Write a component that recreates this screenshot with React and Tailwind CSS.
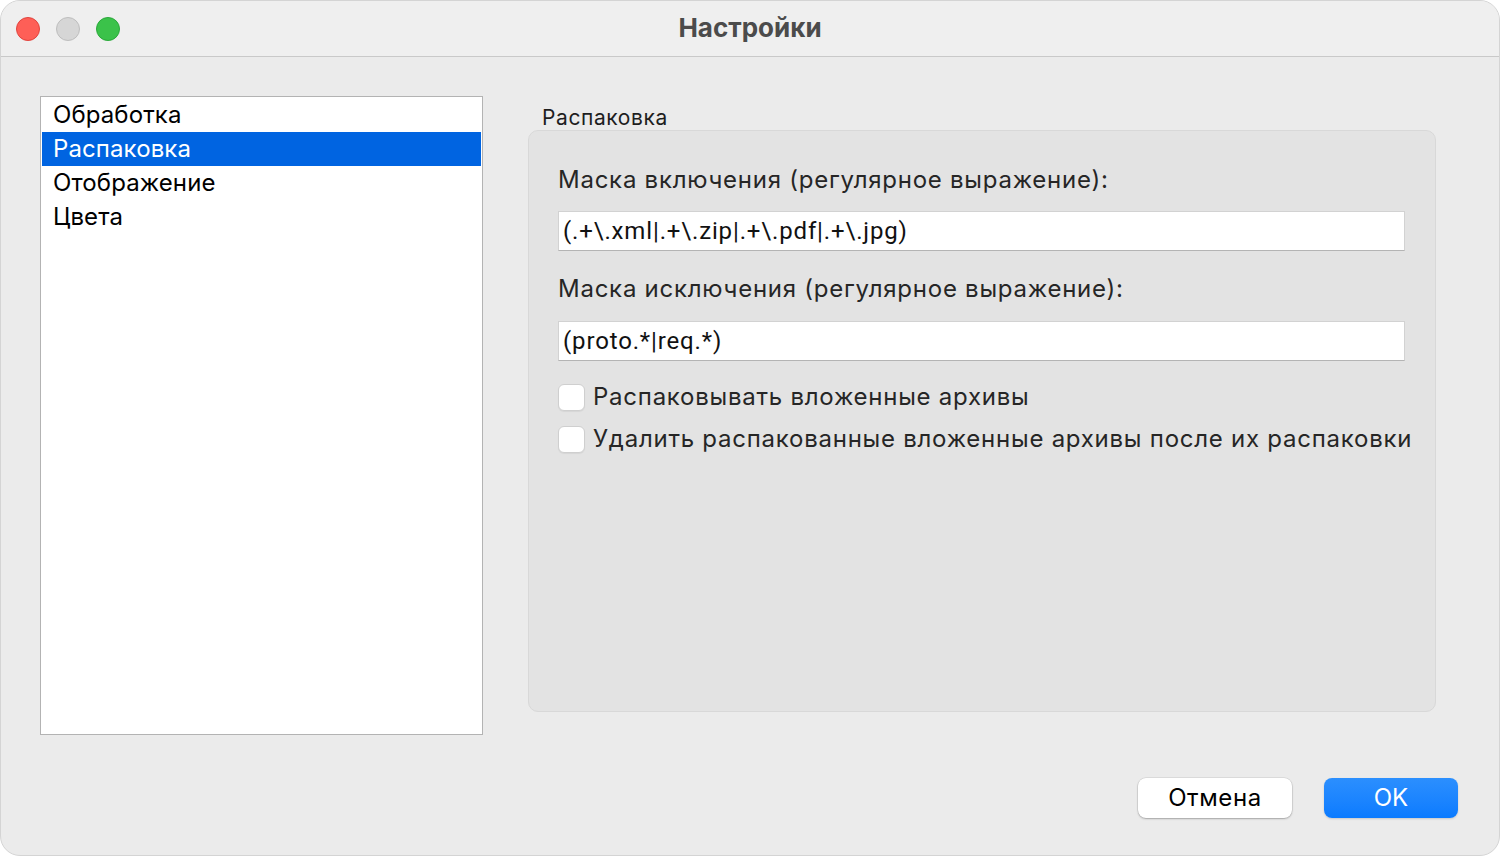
const FONT = "font-['Inter','Liberation_Sans',sans-serif]";

const SECTIONS = ["Обработка", "Распаковка", "Отображение", "Цвета"];

function TrafficLights() {
  return (
    <div className="flex items-center gap-4 pl-[15px]">
      <span className="h-6 w-6 rounded-full border border-[#e0443e] bg-[#fe5f57]" />
      <span className="h-6 w-6 rounded-full border border-[#bdbdbd] bg-[#d6d6d6]" />
      <span className="h-6 w-6 rounded-full border border-[#2aa83a] bg-[#3bc24a]" />
    </div>
  );
}

function TextField({ value }) {
  return (
    <div className="flex h-10 items-center border border-[#d2d2d2] border-b-[#b4b4b4] bg-white pl-1 font-['Roboto',sans-serif] text-[24px] tracking-[0.85px] text-[#111]">
      {value}
    </div>
  );
}

function Checkbox({ label }) {
  return (
    <label className="flex h-[34px] items-center gap-2">
      <span className="h-[27px] w-[27px] shrink-0 rounded-md border border-[#cfcfcf] bg-white shadow-[0_1px_1px_rgba(0,0,0,0.06)]" />
      <span className="text-[24px] tracking-[0.75px] text-[#262626]">{label}</span>
    </label>
  );
}

export default function App() {
  return (
    <div className={`h-[856px] w-[1500px] bg-white ${FONT}`}>
      <div className="flex h-full flex-col overflow-hidden rounded-[20px] border border-[#d4d4d4] bg-[#ebebeb]">
        <div className="relative flex h-[56px] shrink-0 items-center border-b border-[#c9c9c9] bg-[#efefef]">
          <TrafficLights />
          <div className="absolute inset-x-0 top-0 flex h-full items-center justify-center pb-[2px] text-[26px] font-bold text-[#4b4b4b]">
            Настройки
          </div>
        </div>

        <div className="flex flex-1 flex-col pl-[39px] pr-[41px] pt-[39px]">
          <div className="flex gap-[45px]">
            <div className="h-[639px] w-[443px] shrink-0 border border-[#b3b3b3] bg-white p-px">
              {SECTIONS.map((s, i) => (
                <div
                  key={s}
                  className={
                    i === 1
                      ? "flex h-[34px] items-center bg-[#0064e1] pl-[11px] text-[24px] tracking-[0.1px] text-white"
                      : "flex h-[34px] items-center pl-[11px] text-[24px] tracking-[0.1px] text-black"
                  }
                >
                  {s}
                </div>
              ))}
            </div>

            <div className="flex w-[908px] flex-col">
              <div className="h-[34px] pl-[14px] pt-[8px] text-[21px] leading-[28px] tracking-[0.6px] text-[#1e1e1e]">Распаковка</div>
              <div className="h-[582px] rounded-[10px] border border-[#d8d8d8] bg-[#e3e3e3] pl-[29px] pr-[30px] pt-[32px]">
                <div className="text-[24px] leading-[34px] tracking-[0.75px] text-[#262626]">Маска включения (регулярное выражение):</div>
                <div className="mt-[14px]">
                  <TextField value="(.+\.xml|.+\.zip|.+\.pdf|.+\.jpg)" />
                </div>
                <div className="mt-[21px] text-[24px] leading-[34px] tracking-[0.75px] text-[#262626]">Маска исключения (регулярное выражение):</div>
                <div className="mt-[15px]">
                  <TextField value="(proto.*|req.*)" />
                </div>
                <div className="mt-[19px] flex flex-col gap-[8px] whitespace-nowrap">
                  <Checkbox label="Распаковывать вложенные архивы" />
                  <Checkbox label="Удалить распакованные вложенные архивы после их распаковки" />
                </div>
              </div>
            </div>
          </div>

          <div className="mt-[43px] flex justify-end gap-8">
            <button className="h-10 w-[154px] rounded-lg bg-white text-[24px] tracking-[0.6px] text-black shadow-[0_0_0_0.5px_rgba(0,0,0,0.12),0_1px_2px_rgba(0,0,0,0.25)]">
              Отмена
            </button>
            <button className="h-10 w-[134px] rounded-lg bg-gradient-to-b from-[#2b8ffe] to-[#0a7bff] text-[24px] text-white shadow-[0_1px_2px_rgba(0,0,0,0.15)]">
              OK
            </button>
          </div>
        </div>
      </div>
    </div>
  );
}
